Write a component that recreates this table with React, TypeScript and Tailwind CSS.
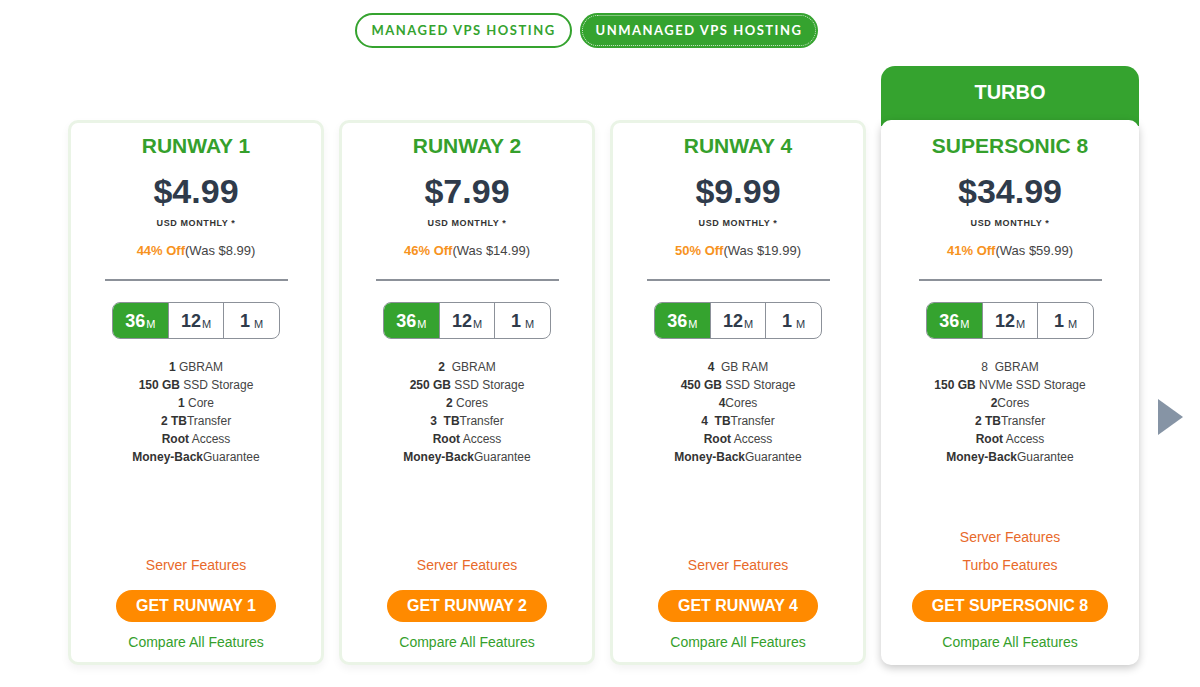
import React from "react";

type Spec = React.ReactNode;
type Plan = {
  name: string;
  price: string;
  off: string;
  was: string;
  specs: Spec[];
  turbo?: boolean;
};

const plans: Plan[] = [
  {
    name: "RUNWAY 1",
    price: "$4.99",
    off: "44% Off",
    was: "(Was $8.99)",
    specs: [
      <><b>1</b> GBRAM</>,
      <><b>150 GB</b> SSD Storage</>,
      <><b>1</b> Core</>,
      <><b>2 TB</b>Transfer</>,
      <><b>Root</b> Access</>,
      <><b>Money-Back</b>Guarantee</>,
    ],
  },
  {
    name: "RUNWAY 2",
    price: "$7.99",
    off: "46% Off",
    was: "(Was $14.99)",
    specs: [
      <><b>2</b>&nbsp; GBRAM</>,
      <><b>250 GB</b> SSD Storage</>,
      <><b>2</b> Cores</>,
      <><b>3&nbsp; TB</b>Transfer</>,
      <><b>Root</b> Access</>,
      <><b>Money-Back</b>Guarantee</>,
    ],
  },
  {
    name: "RUNWAY 4",
    price: "$9.99",
    off: "50% Off",
    was: "(Was $19.99)",
    specs: [
      <><b>4</b>&nbsp; GB RAM</>,
      <><b>450 GB</b> SSD Storage</>,
      <><b>4</b>Cores</>,
      <><b>4&nbsp; TB</b>Transfer</>,
      <><b>Root</b> Access</>,
      <><b>Money-Back</b>Guarantee</>,
    ],
  },
  {
    name: "SUPERSONIC 8",
    price: "$34.99",
    off: "41% Off",
    was: "(Was $59.99)",
    turbo: true,
    specs: [
      <>8&nbsp; GBRAM</>,
      <><b>150 GB</b> NVMe SSD Storage</>,
      <><b>2</b>Cores</>,
      <><b>2 TB</b>Transfer</>,
      <><b>Root</b> Access</>,
      <><b>Money-Back</b>Guarantee</>,
    ],
  },
];

function CardBody({ plan }: { plan: Plan }) {
  return (
    <div
      className={
        plan.turbo
          ? "flex h-full flex-col items-center pt-[13px] pb-[14px]"
          : "flex h-full flex-col items-center pt-[10px] pb-[11px]"
      }
    >
      <div className="text-[21px] font-bold leading-[26px] text-[#35a02c]">{plan.name}</div>
      <div className="mt-[12px] text-[34px] font-bold leading-[40px] text-[#2f3b4b]">{plan.price}</div>
      <div className="mt-[6px] text-[9px] font-bold leading-[12px] tracking-[0.6px] text-[#333]">USD MONTHLY *</div>
      <div className="mt-[14px] text-[13px] leading-[16px]">
        <span className="font-bold text-[#f7931e]">{plan.off}</span>
        <span className="text-[#444]">{plan.was}</span>
      </div>
      <div className="mt-[20px] h-[2px] w-[183px] bg-[#8c9199]" />
      <div className="mt-[21px] flex h-[37px] w-[168px] overflow-hidden rounded-[8px] border border-[#8c9199]">
        <div className="flex flex-1 items-end justify-center bg-[#35a32f] pb-[7px] text-white">
          <span className="text-[18px] font-bold leading-[20px]">36</span>
          <span className="ml-[1px] text-[11px] leading-[14px]">M</span>
        </div>
        <div className="flex flex-1 items-end justify-center border-l border-[#8c9199] pb-[7px] text-[#2f3b4b]">
          <span className="text-[18px] font-bold leading-[20px]">12</span>
          <span className="ml-[1px] text-[11px] leading-[14px]">M</span>
        </div>
        <div className="flex flex-1 items-end justify-center border-l border-[#8c9199] pb-[7px] text-[#2f3b4b]">
          <span className="text-[18px] font-bold leading-[20px]">1</span>
          <span className="ml-[4px] text-[11px] leading-[14px]">M</span>
        </div>
      </div>
      <div className="mt-[19px] flex flex-col items-center text-[12px] leading-[18px] text-[#444] [&_b]:font-bold [&_b]:text-[#333]">
        {plan.specs.map((s, i) => (
          <div key={i}>{s}</div>
        ))}
      </div>
      <div className="mt-auto flex flex-col items-center">
        <div className="text-[14px] leading-[18px] text-[#e8692a]">Server Features</div>
        {plan.turbo && (
          <div className="mt-[10px] text-[14px] leading-[18px] text-[#e8692a]">Turbo Features</div>
        )}
        <button className="mt-[16px] h-[32px] rounded-full bg-[#ff8a00] px-[20px] text-[16px] font-bold text-white">
          GET {plan.name}
        </button>
        <div className="mt-[11px] text-[14px] leading-[18px] text-[#35a02c]">Compare All Features</div>
      </div>
    </div>
  );
}

export default function App() {
  return (
    <div className="relative h-[687px] w-[1200px] overflow-hidden bg-white font-['Liberation_Sans',Arial,sans-serif]">
      <div className="flex gap-[8px] pt-[13px] pl-[355px]">
        <div className="flex h-[35px] w-[217px] items-center justify-center rounded-full border-2 border-[#35a32f] text-[13px] font-bold tracking-[1.5px] text-[#35a32f] font-['Lato',sans-serif]">
          MANAGED VPS HOSTING
        </div>
        <div className="flex h-[35px] w-[238px] items-center justify-center rounded-full bg-[#35a32f] p-[2px] font-['Lato',sans-serif]">
          <div className="flex h-full w-full items-center justify-center rounded-full border border-dotted border-[#cfe8cc] text-[13px] font-bold tracking-[1.5px] text-white">
            UNMANAGED VPS HOSTING
          </div>
        </div>
      </div>
      <div className="mt-[18px] flex items-end pl-[68px]">
        {plans.slice(0, 3).map((p) => (
          <div
            key={p.name}
            className="mr-[15px] h-[545px] w-[256px] rounded-[10px] border-[3px] border-[#eaf4e6] bg-white shadow-[0_4px_8px_rgba(0,0,0,0.05)]"
          >
            <CardBody plan={p} />
          </div>
        ))}
        <div className="flex w-[258px] flex-col">
          <div className="flex h-[60px] items-start justify-center rounded-t-[14px] bg-[#35a32f] pt-[14px] text-[20px] font-bold leading-[24px] text-white">
            TURBO
          </div>
          <div className="relative -mt-[6px] h-[545px] rounded-[10px] bg-white shadow-[0_3px_8px_rgba(0,0,0,0.22)]">
            <CardBody plan={plans[3]} />
          </div>
        </div>
        <div className="mb-[230px] ml-[19px]">
          <svg width="26" height="36" viewBox="0 0 26 36">
            <polygon points="0,0 25,18 0,36" fill="#8694a5" />
          </svg>
        </div>
      </div>
    </div>
  );
}
